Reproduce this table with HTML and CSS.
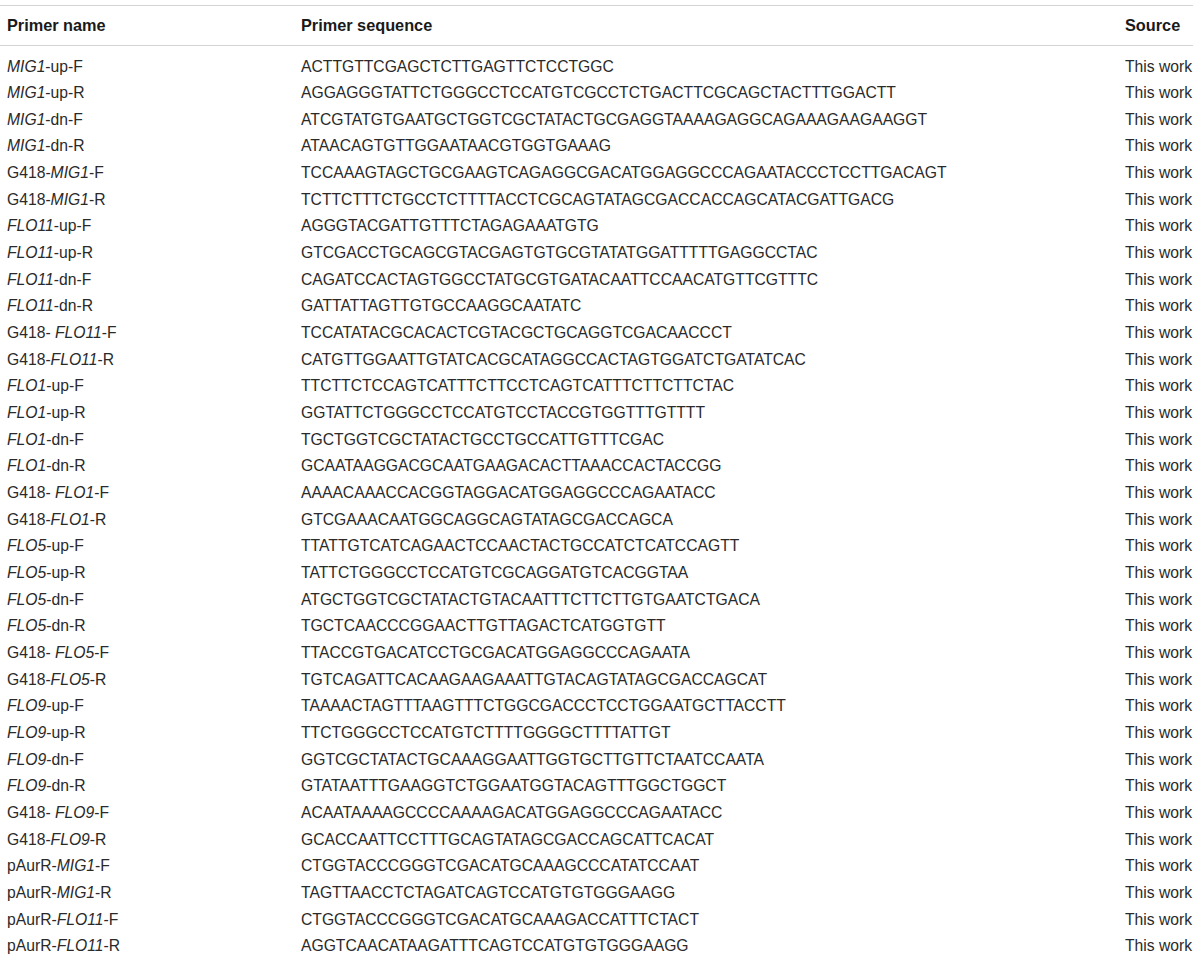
FILE: index.html
```html
<!DOCTYPE html>
<html>
<head>
<meta charset="utf-8">
<link rel="stylesheet" href="styles.css">
</head>
<body>
<table class="primers">
<colgroup><col class="c-name"><col class="c-seq"><col class="c-src"></colgroup>
<thead>
<tr><th>Primer name</th><th>Primer sequence</th><th>Source</th></tr>
</thead>
<tbody>
<tr><td><i>MIG1</i>-up-F</td><td>ACTTGTTCGAGCTCTTGAGTTCTCCTGGC</td><td>This work</td></tr>
<tr><td><i>MIG1</i>-up-R</td><td>AGGAGGGTATTCTGGGCCTCCATGTCGCCTCTGACTTCGCAGCTACTTTGGACTT</td><td>This work</td></tr>
<tr><td><i>MIG1</i>-dn-F</td><td>ATCGTATGTGAATGCTGGTCGCTATACTGCGAGGTAAAAGAGGCAGAAAGAAGAAGGT</td><td>This work</td></tr>
<tr><td><i>MIG1</i>-dn-R</td><td>ATAACAGTGTTGGAATAACGTGGTGAAAG</td><td>This work</td></tr>
<tr><td>G418-<i>MIG1</i>-F</td><td>TCCAAAGTAGCTGCGAAGTCAGAGGCGACATGGAGGCCCAGAATACCCTCCTTGACAGT</td><td>This work</td></tr>
<tr><td>G418-<i>MIG1</i>-R</td><td>TCTTCTTTCTGCCTCTTTTACCTCGCAGTATAGCGACCACCAGCATACGATTGACG</td><td>This work</td></tr>
<tr><td><i>FLO11</i>-up-F</td><td>AGGGTACGATTGTTTCTAGAGAAATGTG</td><td>This work</td></tr>
<tr><td><i>FLO11</i>-up-R</td><td>GTCGACCTGCAGCGTACGAGTGTGCGTATATGGATTTTTGAGGCCTAC</td><td>This work</td></tr>
<tr><td><i>FLO11</i>-dn-F</td><td>CAGATCCACTAGTGGCCTATGCGTGATACAATTCCAACATGTTCGTTTC</td><td>This work</td></tr>
<tr><td><i>FLO11</i>-dn-R</td><td>GATTATTAGTTGTGCCAAGGCAATATC</td><td>This work</td></tr>
<tr><td>G418- <i>FLO11</i>-F</td><td>TCCATATACGCACACTCGTACGCTGCAGGTCGACAACCCT</td><td>This work</td></tr>
<tr><td>G418-<i>FLO11</i>-R</td><td>CATGTTGGAATTGTATCACGCATAGGCCACTAGTGGATCTGATATCAC</td><td>This work</td></tr>
<tr><td><i>FLO1</i>-up-F</td><td>TTCTTCTCCAGTCATTTCTTCCTCAGTCATTTCTTCTTCTAC</td><td>This work</td></tr>
<tr><td><i>FLO1</i>-up-R</td><td>GGTATTCTGGGCCTCCATGTCCTACCGTGGTTTGTTTT</td><td>This work</td></tr>
<tr><td><i>FLO1</i>-dn-F</td><td>TGCTGGTCGCTATACTGCCTGCCATTGTTTCGAC</td><td>This work</td></tr>
<tr><td><i>FLO1</i>-dn-R</td><td>GCAATAAGGACGCAATGAAGACACTTAAACCACTACCGG</td><td>This work</td></tr>
<tr><td>G418- <i>FLO1</i>-F</td><td>AAAACAAACCACGGTAGGACATGGAGGCCCAGAATACC</td><td>This work</td></tr>
<tr><td>G418-<i>FLO1</i>-R</td><td>GTCGAAACAATGGCAGGCAGTATAGCGACCAGCA</td><td>This work</td></tr>
<tr><td><i>FLO5</i>-up-F</td><td>TTATTGTCATCAGAACTCCAACTACTGCCATCTCATCCAGTT</td><td>This work</td></tr>
<tr><td><i>FLO5</i>-up-R</td><td>TATTCTGGGCCTCCATGTCGCAGGATGTCACGGTAA</td><td>This work</td></tr>
<tr><td><i>FLO5</i>-dn-F</td><td>ATGCTGGTCGCTATACTGTACAATTTCTTCTTGTGAATCTGACA</td><td>This work</td></tr>
<tr><td><i>FLO5</i>-dn-R</td><td>TGCTCAACCCGGAACTTGTTAGACTCATGGTGTT</td><td>This work</td></tr>
<tr><td>G418- <i>FLO5</i>-F</td><td>TTACCGTGACATCCTGCGACATGGAGGCCCAGAATA</td><td>This work</td></tr>
<tr><td>G418-<i>FLO5</i>-R</td><td>TGTCAGATTCACAAGAAGAAATTGTACAGTATAGCGACCAGCAT</td><td>This work</td></tr>
<tr><td><i>FLO9</i>-up-F</td><td>TAAAACTAGTTTAAGTTTCTGGCGACCCTCCTGGAATGCTTACCTT</td><td>This work</td></tr>
<tr><td><i>FLO9</i>-up-R</td><td>TTCTGGGCCTCCATGTCTTTTGGGGCTTTTATTGT</td><td>This work</td></tr>
<tr><td><i>FLO9</i>-dn-F</td><td>GGTCGCTATACTGCAAAGGAATTGGTGCTTGTTCTAATCCAATA</td><td>This work</td></tr>
<tr><td><i>FLO9</i>-dn-R</td><td>GTATAATTTGAAGGTCTGGAATGGTACAGTTTGGCTGGCT</td><td>This work</td></tr>
<tr><td>G418- <i>FLO9</i>-F</td><td>ACAATAAAAGCCCCAAAAGACATGGAGGCCCAGAATACC</td><td>This work</td></tr>
<tr><td>G418-<i>FLO9</i>-R</td><td>GCACCAATTCCTTTGCAGTATAGCGACCAGCATTCACAT</td><td>This work</td></tr>
<tr><td>pAurR-<i>MIG1</i>-F</td><td>CTGGTACCCGGGTCGACATGCAAAGCCCATATCCAAT</td><td>This work</td></tr>
<tr><td>pAurR-<i>MIG1</i>-R</td><td>TAGTTAACCTCTAGATCAGTCCATGTGTGGGAAGG</td><td>This work</td></tr>
<tr><td>pAurR-<i>FLO11</i>-F</td><td>CTGGTACCCGGGTCGACATGCAAAGACCATTTCTACT</td><td>This work</td></tr>
<tr><td>pAurR-<i>FLO11</i>-R</td><td>AGGTCAACATAAGATTTCAGTCCATGTGTGGGAAGG</td><td>This work</td></tr>
</tbody>
</table>
</body>
</html>
```

FILE: styles.css
```css
html, body {
  margin: 0;
  padding: 0;
  background: #ffffff;
}

body {
  font-family: "Liberation Sans", Arial, sans-serif;
  color: #2a2a2a;
}

.primers {
  margin-top: 5px;
  width: 1193px;
  border-collapse: collapse;
  table-layout: fixed;
  font-size: 15.7px;
}

.c-name { width: 294px; }
.c-seq { width: 824px; }
.c-src { width: 75px; }

.primers thead th {
  text-align: left;
  font-weight: bold;
  font-size: 16.3px;
  color: #1a1a1a;
  height: 39px;
  padding: 0 0 0 7px;
  border-top: 1px solid #d4d4d4;
  border-bottom: 1px solid #d4d4d4;
  vertical-align: middle;
  white-space: nowrap;
}

.primers tbody td {
  height: 26.67px;
  padding: 0 0 0 7px;
  vertical-align: middle;
  white-space: nowrap;
  line-height: 18px;
}

.primers tbody tr:first-child td {
  height: 34.33px;
  padding-top: 7.67px;
  box-sizing: border-box;
}

.primers i {
  font-style: italic;
}
```
